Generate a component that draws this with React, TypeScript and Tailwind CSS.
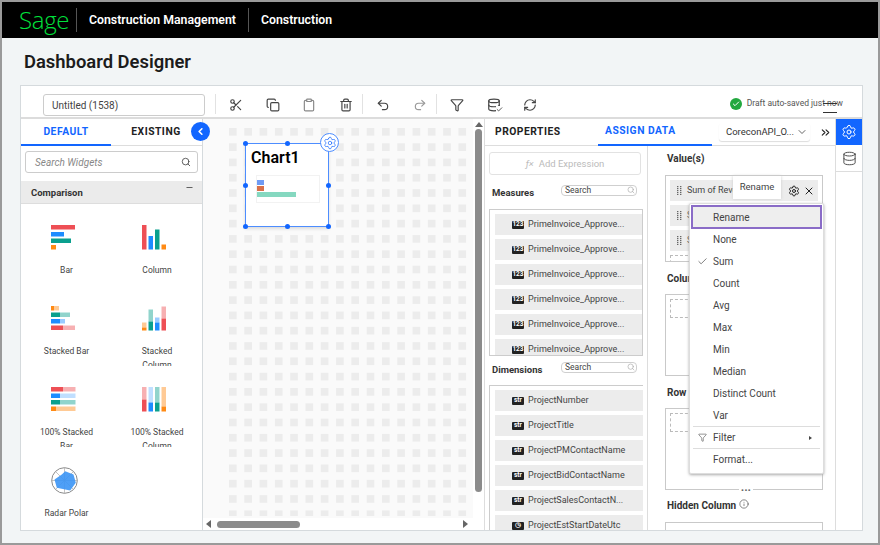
import {
  ChevronDown,
  ChevronLeft,
  ChevronsRight,
  Check,
  Clipboard,
  Copy,
  Database,
  Filter,
  Info,
  Minus,
  Redo2,
  RefreshCw,
  Scissors,
  Search,
  Settings,
  Trash2,
  Undo2,
  X,
} from "lucide-react";

const RED = "#ee4f55";
const BLUE = "#1e8cff";
const TEAL = "#0aa08e";
const ORANGE = "#ff8a14";

function BarIcon() {
  return (
    <svg width="25" height="25" viewBox="0 0 25 25">
      <rect x="0" y="0" width="24" height="4.5" fill={RED} />
      <rect x="0" y="7" width="13" height="4.5" fill={BLUE} />
      <rect x="0" y="13.5" width="20" height="4.5" fill={TEAL} />
      <rect x="0" y="20" width="5" height="4.5" fill={ORANGE} />
    </svg>
  );
}

function ColumnIcon() {
  return (
    <svg width="25" height="25" viewBox="0 0 25 25">
      <rect x="0" y="0" width="4.5" height="24.5" fill={RED} />
      <rect x="6.5" y="11" width="4.5" height="13.5" fill={BLUE} />
      <rect x="13" y="4.5" width="4.5" height="20" fill={TEAL} />
      <rect x="19.5" y="19.5" width="4.5" height="5" fill={ORANGE} />
    </svg>
  );
}

function StackedBarIcon() {
  const rows = [
    { y: 0, a: 3, b: 5, c: ORANGE },
    { y: 6.5, a: 9, b: 10, c: TEAL },
    { y: 13, a: 9, b: 5, c: BLUE },
    { y: 19.5, a: 12, b: 12, c: RED },
  ];
  return (
    <svg width="25" height="25" viewBox="0 0 25 25">
      {rows.map((r) => (
        <g key={r.y}>
          <rect x="0" y={r.y} width={r.a} height="4.5" fill={r.c} />
          <rect x={r.a} y={r.y} width={r.b} height="4.5" fill={r.c} opacity="0.45" />
        </g>
      ))}
    </svg>
  );
}

function StackedColumnIcon() {
  const cols = [
    { x: 0, a: 3, b: 5, c: ORANGE },
    { x: 6.5, a: 9, b: 12, c: TEAL },
    { x: 13, a: 8, b: 5, c: BLUE },
    { x: 19.5, a: 12, b: 12, c: RED },
  ];
  return (
    <svg width="25" height="25" viewBox="0 0 25 25">
      {cols.map((r) => (
        <g key={r.x}>
          <rect x={r.x} y={24.5 - r.a} width="4.5" height={r.a} fill={r.c} />
          <rect x={r.x} y={24.5 - r.a - r.b} width="4.5" height={r.b} fill={r.c} opacity="0.45" />
        </g>
      ))}
    </svg>
  );
}

function FullBarIcon() {
  const rows = [
    { y: 0, a: 12, c: RED },
    { y: 6.5, a: 9, c: BLUE },
    { y: 13, a: 9, c: TEAL },
    { y: 19.5, a: 5, c: ORANGE },
  ];
  return (
    <svg width="25" height="25" viewBox="0 0 25 25">
      {rows.map((r) => (
        <g key={r.y}>
          <rect x="0" y={r.y} width={r.a} height="4.5" fill={r.c} />
          <rect x={r.a} y={r.y} width={24.5 - r.a} height="4.5" fill={r.c} opacity={r.c === BLUE ? 0.28 : 0.45} />
        </g>
      ))}
    </svg>
  );
}

function FullColumnIcon() {
  const cols = [
    { x: 0, a: 12, c: RED },
    { x: 6.5, a: 9, c: BLUE },
    { x: 13, a: 9, c: TEAL },
    { x: 19.5, a: 5, c: ORANGE },
  ];
  return (
    <svg width="25" height="25" viewBox="0 0 25 25">
      {cols.map((r) => (
        <g key={r.x}>
          <rect x={r.x} y={24.5 - r.a} width="4.5" height={r.a} fill={r.c} />
          <rect x={r.x} y="0" width="4.5" height={24.5 - r.a} fill={r.c} opacity={r.c === BLUE ? 0.28 : 0.45} />
        </g>
      ))}
    </svg>
  );
}

function RadarIcon() {
  return (
    <svg width="27" height="27" viewBox="0 0 27 27" className="-mt-px">
      <circle cx="13.5" cy="13.5" r="12.8" fill="white" stroke="#8a8a8a" strokeWidth="1" />
      <path d="M13.5 .7 V26.3 M.7 13.5 H26.3 M4.5 4.5 L22.5 22.5 M22.5 4.5 L4.5 22.5" stroke="#9a9a9a" strokeWidth="0.6" />
      <path d="M14.2 4.2 L22.5 7.5 L24.8 15.8 L19.2 23.5 L5.8 20.8 L3.5 12.5 L10.8 7.5 Z" fill="#3f97f5" opacity="0.92" />
    </svg>
  );
}

function Widget({ icon, label }: { icon: React.ReactNode; label: string }) {
  return (
    <div className="flex h-[81px] w-[91px] flex-col items-center pt-[21px]">
      <div className="mr-[6px] h-[25px] w-[25px]">{icon}</div>
      <div className="mt-[13px] h-[22px] w-[60px] overflow-hidden text-center text-[8.5px] leading-[14px] text-[#444]">
        {label}
      </div>
    </div>
  );
}

function FieldRow({ badge, text }: { badge: string; text: string }) {
  return (
    <div className="ml-[5px] flex h-[21px] shrink-0 items-center bg-[#ececec] pl-[17px]">
      <span className="flex h-[8px] w-[12px] items-center justify-center rounded-[1px] bg-[#222] text-[6.5px] font-bold text-white">
        {badge}
      </span>
      <span className="ml-[4px] text-[9px] whitespace-nowrap text-[#444]">{text}</span>
    </div>
  );
}

function MiniSearch() {
  return (
    <div className="relative h-[11px] w-[76px] rounded-[4px] border border-[#cfcfcf] bg-white pl-[3px] text-[8.5px] leading-[9px] text-[#444]">
      Search
      <Search className="absolute top-0 right-[1px] h-[8px] w-[8px] text-[#aaa]" />
    </div>
  );
}

function Grip() {
  return (
    <svg width="5" height="9" viewBox="0 0 5 9" className="shrink-0">
      {[0, 2, 4, 6, 8].map((y) => (
        <g key={y} fill="#666">
          <rect x="0" y={y} width="1.4" height="1.2" />
          <rect x="3" y={y} width="1.4" height="1.2" />
        </g>
      ))}
    </svg>
  );
}

function ValueRow({ children }: { children?: React.ReactNode }) {
  return (
    <div className="mx-[4px] flex h-[21px] shrink-0 items-center bg-[#ececec] pl-[7px] text-[9px] text-[#444]">
      <Grip />
      {children}
    </div>
  );
}

function Handle({ className }: { className: string }) {
  return <span className={`absolute h-[5px] w-[5px] rounded-full bg-[#1266ff] ${className}`} />;
}

function DropBox({ h }: { h: string }) {
  return (
    <div className={`${h} w-[158px] border border-[#c9c9c9] bg-white p-[4px]`}>
      <div className="h-[19px] w-[147px] border border-dashed border-[#bbb]" />
    </div>
  );
}

function ToolButton({ children }: { children: React.ReactNode }) {
  return <div className="flex w-[36.5px] justify-center text-[#444]">{children}</div>;
}

function ToolDivider() {
  return <div className="relative -left-[2px] -mt-[3px] h-[20px] w-0 border-l border-[#e2e2e2]" />;
}

function MenuItem({ children, check }: { children: React.ReactNode; check?: boolean }) {
  return (
    <div className="relative flex h-[21.9px] items-center pl-[22px] text-[10px] text-[#444]">
      {check && <Check className="absolute left-[6px] h-[11px] w-[11px]" strokeWidth={1.5} />}
      {children}
    </div>
  );
}

export default function App() {
  return (
    <div className="relative h-[545px] w-[880px] overflow-hidden border-2 border-[#9a9a9a] bg-[#f2f5f6] font-['Roboto',sans-serif]">
      {/* top bar */}
      <div className="flex h-9 items-center bg-black pl-[17px] text-white">
        <span className="w-[45px] font-['Open_Sans',sans-serif] text-[24px] leading-none font-light tracking-[-0.3px] text-[#00e03c]">Sage</span>
        <div className="ml-[12px] h-6 w-px bg-[#555]" />
        <span className="ml-[12px] text-[12.3px] font-semibold">Construction Management</span>
        <div className="ml-[12px] h-6 w-px bg-[#555]" />
        <span className="ml-[12px] text-[12.3px] font-semibold">Construction</span>
      </div>

      <div className="flex h-[47px] items-center pt-[1px] pl-[22px] text-[18.4px] font-semibold text-[#1c1c1c]">
        Dashboard Designer
      </div>

      {/* designer card */}
      <div className="ml-[18px] flex h-[446px] w-[843px] flex-col border border-[#d5dadd] bg-white">
        {/* toolbar */}
        <div className="relative flex h-[33px] shrink-0 items-center border-b-2 border-[#dcdcdc] pt-[7px]">
          <div className="ml-[22px] flex h-[22px] w-[162px] items-center rounded-[3px] border border-[#ccc] pl-[8px] text-[10px] text-[#444]">
            Untitled (1538)
          </div>
          <div className="ml-[10px] -mt-[3px] h-[20px] w-px bg-[#e2e2e2]" />
          <div className="ml-[2px] flex items-center">
            <ToolButton><Scissors className="h-[14px] w-[14px]" /></ToolButton>
            <ToolButton><Copy className="h-[14px] w-[14px]" /></ToolButton>
            <ToolButton><Clipboard className="h-[14px] w-[14px] text-[#888]" /></ToolButton>
            <ToolButton><Trash2 className="h-[14px] w-[14px]" /></ToolButton>
            <ToolDivider />
            <ToolButton><Undo2 className="h-[14px] w-[14px]" /></ToolButton>
            <ToolButton><Redo2 className="h-[14px] w-[14px] text-[#999]" /></ToolButton>
            <ToolDivider />
            <ToolButton><Filter className="h-[14px] w-[14px]" /></ToolButton>
            <ToolButton>
              <span className="relative">
                <Database className="h-[14px] w-[14px]" />
                <Check className="absolute -right-[2px] -bottom-[1px] h-[7px] w-[7px] bg-white" strokeWidth={3} />
              </span>
            </ToolButton>
            <ToolButton><RefreshCw className="h-[14px] w-[14px]" /></ToolButton>
          </div>
          <div className="ml-auto mr-[19px] -mt-[3px] flex items-center text-[8.5px] text-[#555]">
            <span className="flex h-[12px] w-[12px] items-center justify-center rounded-full bg-[#22a83f]">
              <Check className="h-[8px] w-[8px] text-white" strokeWidth={3} />
            </span>
            <span className="ml-[5px] whitespace-nowrap">Draft auto-saved just now</span>
          </div>
          <div className="absolute top-[17px] left-[802px] h-[10px] w-[14px] border-y border-[#333]" />
        </div>

        {/* body */}
        <div className="flex min-h-0 flex-1">
          {/* widgets panel */}
          <div className="flex w-[182px] shrink-0 flex-col overflow-hidden border-r border-[#d5dadd]">
            <div className="flex h-[27px] shrink-0 border-b border-[#ddd] text-[10.3px] font-bold tracking-[0.5px]">
              <div className="flex h-[27px] w-[90px] items-center justify-center border-b-2 border-[#1266ff] text-[#1266ff]">DEFAULT</div>
              <div className="flex w-[90px] items-center justify-center text-[#222]">EXISTING</div>
            </div>
            <div className="mx-[4px] mt-[5px] flex h-[22px] shrink-0 items-center rounded-[3px] border border-[#ccc] pr-[6px] pl-[9px] text-[10px] text-[#888] italic">
              Search Widgets
              <Search className="ml-auto h-[10px] w-[10px] text-[#444]" />
            </div>
            <div className="mt-[8px] flex h-[23px] shrink-0 items-center justify-between border-b border-[#ddd] bg-[#ebebeb] pt-[3px] pr-[8px] pl-[10px] text-[9.5px] font-bold text-[#333]">
              Comparison
              <Minus className="-mt-[12px] h-[9px] w-[9px]" strokeWidth={2} />
            </div>
            <div className="grid grid-cols-2">
              <Widget icon={<BarIcon />} label="Bar" />
              <Widget icon={<ColumnIcon />} label="Column" />
              <Widget icon={<StackedBarIcon />} label="Stacked Bar" />
              <Widget icon={<StackedColumnIcon />} label="Stacked Column" />
              <Widget icon={<FullBarIcon />} label="100% Stacked Bar" />
              <Widget icon={<FullColumnIcon />} label="100% Stacked Column" />
              <Widget icon={<RadarIcon />} label="Radar Polar" />
            </div>
          </div>

          {/* canvas */}
          <div className="flex w-[281px] shrink-0 flex-col bg-[#fafafa]">
            <div className="flex min-h-0 flex-1">
              <div className="flex-1 pt-[9px] pl-[26px]">
                <div className="h-[388px] w-[244px] bg-[conic-gradient(#ececec_25%,transparent_0)] bg-[size:15.3px_15.3px] bg-[position:-7.65px_0px]" />
              </div>
              <div className="flex w-[11px] flex-col items-center bg-white pt-[3px]">
                <div className="h-0 w-0 border-x-[4px] border-b-[5px] border-x-transparent border-b-[#666]" />
                <div className="mt-[2px] h-[363px] w-[7px] rounded-[4px] bg-[#8b8b8b]" />
              </div>
            </div>
            <div className="flex h-[12px] shrink-0 items-center bg-white pl-[3px]">
              <div className="h-0 w-0 border-y-[4px] border-r-[5px] border-y-transparent border-r-[#666]" />
              <div className="ml-[6px] h-[7px] w-[83px] rounded-[4px] bg-[#8b8b8b]" />
              <div className="ml-[163px] h-0 w-0 border-y-[4px] border-l-[5px] border-y-transparent border-l-[#666]" />
            </div>
          </div>

          {/* data panel */}
          <div className="flex w-[351px] shrink-0 flex-col overflow-hidden border-l border-[#ddd]">
            <div className="flex h-[27px] shrink-0 items-center border-b border-[#ddd] text-[10.3px] font-bold tracking-[0.5px]">
              <span className="ml-[10px] w-[103px] text-[#222]">PROPERTIES</span>
              <div className="flex h-[27px] w-[114px] items-center border-b-2 border-[#1266ff] pl-[7px] text-[#1266ff]">ASSIGN DATA</div>
              <div className="ml-[7px] flex h-[18px] w-[91px] items-center justify-between rounded-[3px] pr-[2px] pl-[7px] text-[9.5px] font-normal tracking-normal text-[#333] shadow-[0_1px_1px_#ddd]">
                CoreconAPI_O...
                <ChevronDown className="h-[12px] w-[12px]" strokeWidth={1.5} />
              </div>
              <ChevronsRight className="ml-[9px] h-[13px] w-[13px] text-[#222]" strokeWidth={2} />
            </div>
            <div className="flex min-h-0 flex-1">
              <div className="flex w-[163px] shrink-0 flex-col border-r border-[#ddd]">
                <div className="mt-[6px] ml-[4px] flex h-[23px] w-[152px] shrink-0 items-center justify-center rounded-[3px] border border-[#e2e2e2] pt-[1px] text-[9.5px] text-[#bbb]">
                  <span className="mr-[5px] italic">ƒ×</span>Add Expression
                </div>
                <div className="mt-[10px] flex h-[14px] shrink-0 items-start pl-[7px]">
                  <span className="mt-[1px] w-[69px] text-[9.5px] font-bold text-[#333]">Measures</span>
                  <MiniSearch />
                </div>
                <div className="mt-[10px] ml-[4px] flex h-[147px] w-[154px] shrink-0 flex-col gap-[4px] overflow-hidden border border-[#ccc] pt-[4px]">
                  {[0, 1, 2, 3, 4, 5].map((i) => (
                    <FieldRow key={i} badge="123" text="PrimeInvoice_Approve..." />
                  ))}
                </div>
                <div className="mt-[6px] flex h-[14px] shrink-0 items-start pl-[7px]">
                  <span className="mt-[1px] w-[69px] text-[9.5px] font-bold text-[#333]">Dimensions</span>
                  <MiniSearch />
                </div>
                <div className="mt-[9px] ml-[4px] flex min-h-0 w-[154px] flex-1 flex-col gap-[4px] overflow-hidden border-t border-l border-[#ccc] pt-[4px]">
                  <FieldRow badge="str" text="ProjectNumber" />
                  <FieldRow badge="str" text="ProjectTitle" />
                  <FieldRow badge="str" text="ProjectPMContactName" />
                  <FieldRow badge="str" text="ProjectBidContactName" />
                  <FieldRow badge="str" text="ProjectSalesContactN..." />
                  <FieldRow badge="◷" text="ProjectEstStartDateUtc" />
                </div>
              </div>
              <div className="flex-1 overflow-hidden pl-[17px]">
                <div className="ml-[2px] flex h-6 items-center text-[10px] font-bold text-[#333]">Value(s)</div>
                <div className="mt-[5px] flex h-[87px] w-[158px] flex-col gap-[4px] overflow-hidden border border-[#c9c9c9] pt-[4px]">
                  <ValueRow>
                    <span className="ml-[5px]">Sum of Reve</span>
                    <Settings className="ml-auto h-[12px] w-[12px] text-[#222]" />
                    <X className="mr-[3px] ml-[3px] h-[12px] w-[12px] text-[#222]" />
                  </ValueRow>
                  <ValueRow><span className="ml-[5px]">S</span></ValueRow>
                  <ValueRow><span className="ml-[5px]">S</span></ValueRow>
                  <div className="mx-[4px] h-[19px] shrink-0 border border-dashed border-[#bbb]" />
                </div>
                <div className="mt-[8px] ml-[2px] flex h-4 items-center text-[10px] font-bold text-[#333]">Column</div>
                <div className="mt-[8px]"><DropBox h="h-[82px]" /></div>
                <div className="mt-[8px] ml-[2px] flex h-4 items-center text-[10px] font-bold text-[#333]">Row</div>
                <div className="mt-[8px]"><DropBox h="h-[82px]" /></div>
                <div className="mt-[7px] ml-[2px] flex h-4 items-center text-[10px] font-bold text-[#333]">
                  Hidden Column
                  <Info className="ml-[3px] -mt-[2px] h-[10px] w-[10px] text-[#444]" strokeWidth={1.5} />
                </div>
                <div className="mt-[9px] h-[20px] w-[158px] border border-[#c9c9c9]" />
              </div>
            </div>
          </div>

          {/* right rail */}
          <div className="flex w-[27px] shrink-0 flex-col border-l border-[#ddd]">
            <div className="-mt-px flex h-[27px] items-center justify-center bg-[#1266ff]">
              <Settings className="h-[16px] w-[16px] text-white" strokeWidth={1.5} />
            </div>
            <div className="flex h-[27px] items-center justify-center border-b border-[#ddd]">
              <Database className="h-[15px] w-[15px] text-[#444]" strokeWidth={1.5} />
            </div>
          </div>
        </div>
      </div>

      {/* collapse toggle */}
      <div className="absolute top-[120px] left-[189px] flex h-[19px] w-[19px] items-center justify-center rounded-full bg-[#1266ff]">
        <ChevronLeft className="h-[11px] w-[11px] text-white" strokeWidth={3.5} />
      </div>

      {/* selected chart on the canvas */}
      <div className="absolute top-[141px] left-[243px] h-[84px] w-[84px] border-[1.5px] border-[#4d8dff] bg-white shadow-[0_2px_3px_#ddd]">
        <div className="pt-[4px] pl-[5px] text-[16px] leading-[20px] font-semibold text-black">Chart1</div>
        <div className="mt-[7px] ml-[10px] flex h-[28px] w-[64px] flex-col gap-[1px] border border-[#f2f2f2] pt-[4px] pl-0">
          <div className="h-[5px] w-[7px] bg-[#6f9bf5]" />
          <div className="h-[5px] w-[7px] bg-[#d9704a]" />
          <div className="h-[5px] w-[39px] bg-[#85d8c0]" />
        </div>
        <Handle className="-top-[3px] -left-[3px]" />
        <Handle className="-top-[3px] left-[39px]" />
        <Handle className="-top-[3px] -right-[3px]" />
        <Handle className="top-[39px] -left-[3px]" />
        <Handle className="top-[39px] -right-[3px]" />
        <Handle className="-bottom-[3px] -left-[3px]" />
        <Handle className="-bottom-[3px] left-[39px]" />
        <Handle className="-right-[3px] -bottom-[3px]" />
        <div className="absolute -top-[11px] -right-[11px] flex h-[19px] w-[19px] items-center justify-center rounded-full border border-[#4d8dff] bg-white">
          <Settings className="h-[14px] w-[14px] text-[#1266ff]" strokeWidth={1.2} />
        </div>
      </div>

      {/* tooltip */}
      <div className="absolute top-[174px] left-[731px] z-20 flex h-[23px] w-[48px] items-center justify-center bg-white text-[9.5px] text-[#444] shadow-[0_0_3px_#ccc]">
        Rename
      </div>

      {/* context menu */}
      <div className="absolute top-[201px] left-[687px] z-10 h-[271px] w-[135px] rounded-[2px] border border-[#ddd] bg-white px-[1px] pt-[1px] shadow-[0_1px_3px_#aaa]">
        <div className="flex h-[24px] items-center border-2 border-[#8a6cc7] bg-[#eee] pl-[20px] text-[10px] text-[#444]">Rename</div>
        <div>
          <MenuItem>None</MenuItem>
          <MenuItem check>Sum</MenuItem>
          <MenuItem>Count</MenuItem>
          <MenuItem>Avg</MenuItem>
          <MenuItem>Max</MenuItem>
          <MenuItem>Min</MenuItem>
          <MenuItem>Median</MenuItem>
          <MenuItem>Distinct Count</MenuItem>
          <MenuItem>Var</MenuItem>
        </div>
        <div className="mx-[2px] border-t border-[#ddd]" />
        <div className="relative flex h-[21px] items-center pl-[22px] text-[10px] text-[#444]">
          <Filter className="absolute left-[7px] h-[9px] w-[9px]" strokeWidth={1.5} />
          Filter
          <span className="absolute right-[10px] h-0 w-0 border-y-[2.5px] border-l-[3px] border-y-transparent border-l-[#444]" />
        </div>
        <div className="mx-[2px] border-t border-[#ddd]" />
        <MenuItem>Format...</MenuItem>
      </div>

      {/* resize dots under row box */}
      <div className="absolute top-[487px] left-[737px] bg-white px-[2px] text-[8px] leading-[4px] font-bold tracking-[0.5px] text-[#666]">•••</div>
    </div>
  );
}
